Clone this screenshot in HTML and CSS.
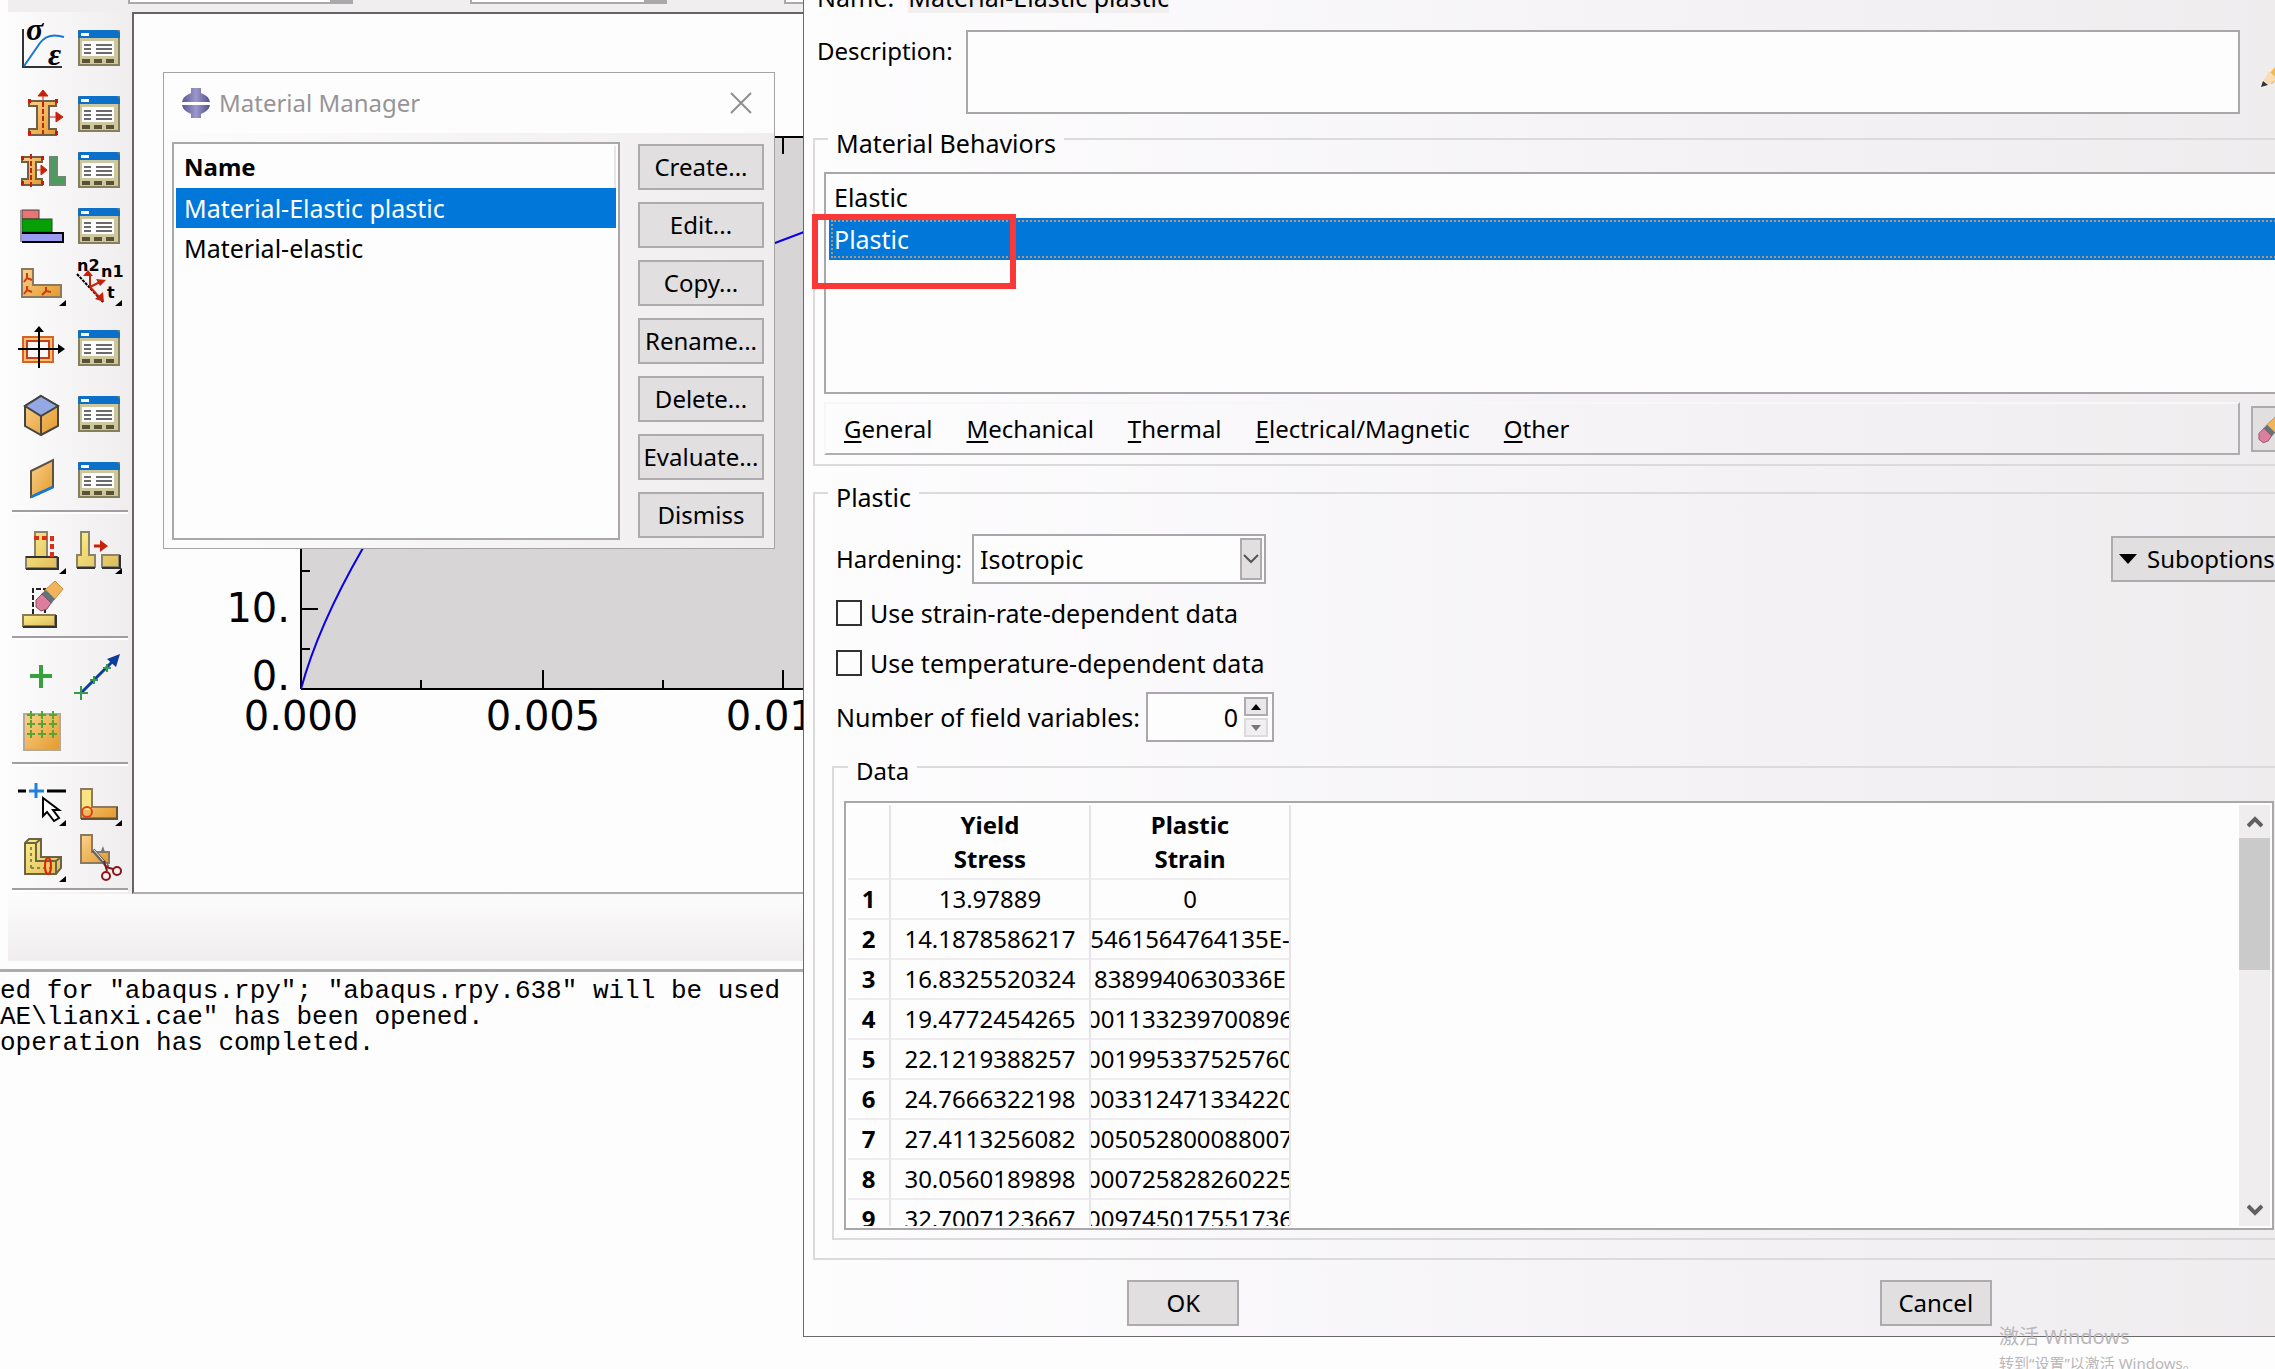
FILE: index.html
```html
<!DOCTYPE html>
<html lang="en">
<head>
  <meta charset="UTF-8">
  <title>Edit Material</title>
  <link rel="stylesheet" href="styles.css">
</head>
<body>

  <!-- shared icons -->
  <svg class="defs" width="0" height="0">
    <defs>
      <linearGradient id="orange" x1="0" y1="0" x2="1" y2="1">
        <stop offset="0" stop-color="#fbd28c"/><stop offset="1" stop-color="#e39a2c"/>
      </linearGradient>
      <linearGradient id="yellow" x1="0" y1="0" x2="1" y2="1">
        <stop offset="0" stop-color="#fbee88"/><stop offset="1" stop-color="#e0bb5c"/>
      </linearGradient>
      <linearGradient id="purple" x1="0" y1="0" x2="1" y2="0">
        <stop offset="0" stop-color="#5d5790"/><stop offset=".5" stop-color="#9c98cc"/><stop offset="1" stop-color="#544e86"/>
      </linearGradient>
      <symbol id="manager" viewBox="0 0 56 56">
        <rect x="9" y="11" width="40" height="34" fill="#cdc7a0" stroke="#85805c" stroke-width="2"/>
        <path d="M8 18v-7l2-1h37l3 3v5z" fill="#0c70c8"/>
        <rect x="11" y="13" width="8" height="3" fill="#fff"/>
        <rect x="12" y="21" width="32" height="15" fill="#fdfdfd"/>
        <path d="M14 25h7M26 25h16M14 29h7M26 29h16M14 33h7M26 33h16" stroke="#6b6b6b" stroke-width="2"/>
        <path d="M12 41h8M24 41h8M36 41h8" stroke="#5a5230" stroke-width="4"/>
      </symbol>
      <symbol id="corner" viewBox="0 0 56 56"><path d="M52 46v6h-7z" fill="#000"/></symbol>
      <symbol id="eraser" viewBox="0 0 56 56">
        <path d="M30 13l11-10 8 8-9 11z" fill="#f2b45a" stroke="#c98a3c"/>
        <path d="M27 16l5-4 9 9-4 5z" fill="#60747c"/>
        <path d="M22 22l6-6 9 9-4 6-6 2-5-4z" fill="#dc7f9e" stroke="#8c4c62"/>
      </symbol>
    </defs>
  </svg>

  <div class="app">
    <div class="context-bar">
      <span class="combo combo-wide"></span>
      <span class="combo"></span>
      <span class="combo"></span>
    </div>

    <div class="workspace">
      <div class="toolbox">
        <div class="tool-row">
          <button class="tool" aria-label="Create material"><svg viewBox="0 0 56 56">
            <path d="M9 9v38h39" fill="none" stroke="#333" stroke-width="2"/>
            <path d="M10 46L26 23Q34 12 50 17" fill="none" stroke="#1478d4" stroke-width="2"/>
            <text x="12" y="20" class="greek">σ</text><text x="34" y="45" class="greek">ε</text></svg></button>
          <button class="tool" aria-label="Material manager"><svg><use href="#manager"/></svg></button>
        </div>
        <div class="tool-row spaced">
          <button class="tool" aria-label="Create section"><svg viewBox="0 0 56 56">
            <path d="M15 15h27v5h-7v23h7v6h-27v-6h8v-23h-8z" fill="url(#orange)" stroke="#6f5f48" stroke-width="2"/>
            <path d="M29 16v32" stroke="#c8210a" stroke-width="2" stroke-dasharray="5 2"/>
            <path d="M29 4l5 6h-10zM29 9v5M49 31l-7-5v10zM36 31h7" fill="#c8210a" stroke="#c8210a"/>
            <path d="M14 15h3M41 15h3M14 47h3M41 47h3" stroke="#d01808" stroke-width="4"/></svg></button>
          <button class="tool" aria-label="Section manager"><svg><use href="#manager"/></svg></button>
        </div>
        <div class="tool-row">
          <button class="tool" aria-label="Assign section"><svg viewBox="0 0 56 56">
            <path d="M8 15h20v5h-6v17h6v6H8v-6h6V20H8z" fill="url(#orange)" stroke="#6f5f48" stroke-width="2"/>
            <path d="M17 12v33" stroke="#c8210a" stroke-width="2" stroke-dasharray="5 2"/>
            <path d="M33 28l-6-5v10zM23 28h5" fill="#c8210a" stroke="#c8210a"/>
            <path d="M7 16h3M27 16h3M7 41h3M27 41h3" stroke="#d01808" stroke-width="4"/>
            <path d="M36 15h7v20h8v8H36z" fill="#4a9e5c" stroke="#6d8a72" stroke-width="2"/></svg></button>
          <button class="tool" aria-label="Section assignment manager"><svg><use href="#manager"/></svg></button>
        </div>
        <div class="tool-row">
          <button class="tool" aria-label="Create composite layup"><svg viewBox="0 0 56 56">
            <rect x="8" y="12" width="17" height="9" fill="#e87474" stroke="#444"/>
            <rect x="8" y="21" width="30" height="13" fill="#06a006" stroke="#145214"/>
            <rect x="8" y="35" width="41" height="9" fill="#9a9cf4"/>
            <path d="M8 35h41v9H8" fill="none" stroke="#000" stroke-width="2"/>
            <path d="M7 12v32" stroke="#999" stroke-width="2"/></svg></button>
          <button class="tool" aria-label="Composite layup manager"><svg><use href="#manager"/></svg></button>
        </div>
        <div class="tool-row">
          <button class="tool" aria-label="Assign material orientation"><svg viewBox="0 0 56 56">
            <path d="M8 15h11v16h28v12H8z" fill="url(#orange)" stroke="#8b7a60" stroke-width="2"/>
            <path d="M13 19v5l-3 4M13 24l5 2M13 32v4l-3 4M13 36l5 2M32 33v4l-4 4M32 37l5 1" fill="none" stroke="#d03818" stroke-width="2"/>
            <use href="#corner"/></svg></button>
          <button class="tool" aria-label="Assign beam orientation"><svg viewBox="0 0 56 56">
            <path d="M7 20l26 28" stroke="#000" stroke-width="2" stroke-dasharray="3 1"/>
            <path d="M20 33V20M20 33l10-5M20 33l11 12" stroke="#c8210a" stroke-width="2"/>
            <path d="M18 16l5 6H13zM36 26l-10-1 4 7zM34 48l-9-3 8-7z" fill="#c8210a"/>
            <text x="7" y="17" class="axis-name">n2</text><text x="31" y="23" class="axis-name">n1</text>
            <text x="37" y="44" class="axis-name">t</text><use href="#corner"/></svg></button>
        </div>
        <div class="tool-row spaced">
          <button class="tool" aria-label="Create profile"><svg viewBox="0 0 56 56">
            <rect x="9" y="17" width="30" height="25" fill="#fbc46c" stroke="#d4622c" stroke-width="2"/>
            <rect x="13" y="21" width="22" height="17" fill="#fbf5f5" stroke="#c83c1c" stroke-width="2"/>
            <path d="M4 29h42M25 10v38" stroke="#000" stroke-width="2"/>
            <path d="M51 29l-7-5v10zM25 6l5 6H20z" fill="#000"/></svg></button>
          <button class="tool" aria-label="Profile manager"><svg><use href="#manager"/></svg></button>
        </div>
        <div class="tool-row spaced">
          <button class="tool" aria-label="Create skin"><svg viewBox="0 0 56 56">
            <path d="M27 10l17 10v20L27 49 11 40V20z" fill="url(#orange)" stroke="#444" stroke-width="2"/>
            <path d="M27 10l17 10-17 10-16-10z" fill="#94a8e4" stroke="#444" stroke-width="2"/>
            <path d="M27 30v19" stroke="#444" stroke-width="2"/></svg></button>
          <button class="tool" aria-label="Skin manager"><svg><use href="#manager"/></svg></button>
        </div>
        <div class="tool-row spaced">
          <button class="tool" aria-label="Create stringer"><svg viewBox="0 0 56 56">
            <path d="M17 19L39 8v27L17 45z" fill="url(#orange)" stroke="#5c5244" stroke-width="2"/>
            <path d="M17 45l22-10" stroke="#1478d4" stroke-width="3"/></svg></button>
          <button class="tool" aria-label="Stringer manager"><svg><use href="#manager"/></svg></button>
        </div>
        <div class="separator"></div>
        <div class="tool-row">
          <button class="tool" aria-label="Create inertia"><svg viewBox="0 0 56 56">
            <path d="M21 10h12v25h10v11H12V35h9z" fill="url(#yellow)" stroke="#8a8468" stroke-width="2"/>
            <path d="M12 47h32V35M12 35h31" fill="none" stroke="#333" stroke-width="2"/>
            <path d="M20 16h14M38 14v21" stroke="#d8301c" stroke-width="4" stroke-dasharray="5 3"/>
            <use href="#corner"/></svg></button>
          <button class="tool" aria-label="Detach feature"><svg viewBox="0 0 56 56">
            <path d="M11 10h8v23h6v12H7V33h4zM32 33h17v12H32z" fill="url(#yellow)" stroke="#8a8468" stroke-width="2"/>
            <path d="M7 46h18M32 46h18V33" fill="none" stroke="#333" stroke-width="2"/>
            <path d="M24 24h8" stroke="#c8210a" stroke-width="3"/><path d="M38 24l-8-6v12z" fill="#c8210a"/>
            <use href="#corner"/></svg></button>
        </div>
        <div class="tool-row">
          <button class="tool" aria-label="Remove faces"><svg viewBox="0 0 56 56">
            <path d="M19 36V11h12v25" fill="none" stroke="#222" stroke-width="2" stroke-dasharray="5 2"/>
            <rect x="9" y="37" width="32" height="11" fill="url(#yellow)" stroke="#8a7c50" stroke-width="2"/>
            <path d="M9 49h33V37" fill="none" stroke="#333" stroke-width="2"/>
            <use href="#eraser"/></svg></button>
        </div>
        <div class="separator"></div>
        <div class="tool-row">
          <button class="tool" aria-label="Create datum point"><svg viewBox="0 0 56 56">
            <path d="M16 28h22M27 17v23" stroke="#38a03c" stroke-width="4"/></svg></button>
          <button class="tool" aria-label="Create datum axis"><svg viewBox="0 0 56 56">
            <path d="M11 45L44 12" stroke="#0c3c9c" stroke-width="3"/>
            <path d="M50 6l-4 13-9-8z" fill="#0c3c9c"/>
            <path d="M4 45h14M11 38v14M20 32h8M24 28v8M33 20h8M37 16v8" stroke="#38984c" stroke-width="2"/></svg></button>
        </div>
        <div class="tool-row">
          <button class="tool" aria-label="Create reference points"><svg viewBox="0 0 56 56">
            <rect x="10" y="10" width="36" height="36" fill="url(#orange)" stroke="#b5aa98" stroke-width="2"/>
            <path d="M13 11h8M24 11h8M35 11h8M13 20h8M24 20h8M35 20h8M13 30h8M24 30h8M35 30h8M17 7v8M28 7v8M39 7v8M17 16v8M28 16v8M39 16v8M17 26v8M28 26v8M39 26v8" stroke="#5aa430" stroke-width="2"/></svg></button>
        </div>
        <div class="separator"></div>
        <div class="tool-row">
          <button class="tool" aria-label="Partition edge"><svg viewBox="0 0 56 56">
            <path d="M4 17h8M33 17h19" stroke="#000" stroke-width="3"/>
            <path d="M15 17h15M22 9v15" stroke="#2080e0" stroke-width="3"/>
            <path d="M29 24v18l4-4 7 9 5-3-6-8h6z" fill="#fff" stroke="#000" stroke-width="2"/>
            <use href="#corner"/></svg></button>
          <button class="tool" aria-label="Partition face"><svg viewBox="0 0 56 56">
            <path d="M11 15h11v18h25v11H11z" fill="url(#orange)" stroke="#8b7a60" stroke-width="2"/>
            <path d="M12 16h9v20h-9z" fill="#f8e482"/><path d="M47 33v12H11" fill="none" stroke="#64543c" stroke-width="2"/>
            <circle cx="17" cy="38" r="5" fill="none" stroke="#e04018" stroke-width="2"/>
            <use href="#corner"/></svg></button>
        </div>
        <div class="tool-row">
          <button class="tool" aria-label="Partition cell"><svg viewBox="0 0 56 56">
            <path d="M11 13l4-4h12v18h20v11l-5 6H11z" fill="url(#yellow)" stroke="#6c6444" stroke-width="2"/>
            <path d="M11 13h11l5-4M22 13v18h20l5-4M42 31v13" fill="none" stroke="#6c6444" stroke-width="2"/>
            <path d="M17 17v22M17 38h22" stroke="#8b8358" stroke-width="2" stroke-dasharray="3 3"/>
            <ellipse cx="34" cy="36" rx="3" ry="8" fill="none" stroke="#d8280c" stroke-width="2"/>
            <use href="#corner"/></svg></button>
          <button class="tool" aria-label="Delete partition"><svg viewBox="0 0 56 56">
            <path d="M11 5h11v17h17v11H11z" fill="url(#orange)" stroke="#8b7a60" stroke-width="2"/>
            <path d="M23 20l15 17" stroke="#666" stroke-width="4"/><path d="M24 20l13 15" stroke="#eee"/>
            <path d="M31 21l2-5 2 6" fill="#777"/>
            <path d="M34 31l3 10M36 37l7 2" stroke="#8c1414" stroke-width="2"/>
            <circle cx="36" cy="46" r="4" fill="none" stroke="#8c1414" stroke-width="2"/>
            <circle cx="47" cy="41" r="4" fill="none" stroke="#8c1414" stroke-width="2"/></svg></button>
        </div>
        <div class="separator"></div>
      </div>

      <div class="viewport">
        <svg class="plot" width="900" height="878">
          <rect x="167" y="123" width="733" height="552" fill="#d7d5d6"/>
          <path d="M167 675V123H900M167 675H900" fill="none" stroke="#000" stroke-width="2"/>
          <path d="M168 557h8M168 595h16M168 635h8M287 674v-8M409 674v-18M529 674v-8M649 674v-18M649 124v16" stroke="#000" stroke-width="2"/>
          <path d="M167 675Q184 612 229 534C300 400 450 280 641 229L670 218 700 210" fill="none" stroke="#0a00e6" stroke-width="2"/>
          <g class="plot-label">
            <text x="156" y="608" text-anchor="end">10.</text>
            <text x="156" y="676" text-anchor="end">0.</text>
            <text x="167" y="716" text-anchor="middle">0.000</text>
            <text x="409" y="716" text-anchor="middle">0.005</text>
            <text x="649" y="716" text-anchor="middle">0.010</text>
          </g>
        </svg>
      </div>
    </div>

    <div class="prompt-area"></div>
    <div class="messages">
      <pre>ed for "abaqus.rpy"; "abaqus.rpy.638" will be used
AE\lianxi.cae" has been opened.
operation has completed.</pre>
    </div>
  </div>

  <!-- Material Manager window -->
  <div class="window manager">
    <div class="title-bar">
      <svg class="logo" width="30" height="30" viewBox="0 0 30 30">
        <path d="M10 0h10v5q8 3 9 9H1q1-6 9-9zM1 17h28q-1 6-9 9v4H10v-4q-8-3-9-9z" fill="url(#purple)"/>
      </svg>
      <span class="title">Material Manager</span>
      <button class="close" aria-label="Close"><svg width="22" height="22" viewBox="0 0 22 22"><path d="M1 1l20 20M21 1L1 21" stroke="#8f8f8f" stroke-width="2"/></svg></button>
    </div>
    <div class="manager-body">
      <div class="list manager-list">
        <div class="list-head">Name</div>
        <ul>
          <li class="selected">Material-Elastic plastic</li>
          <li>Material-elastic</li>
        </ul>
      </div>
      <div class="manager-actions">
        <button class="btn">Create...</button>
        <button class="btn">Edit...</button>
        <button class="btn">Copy...</button>
        <button class="btn">Rename...</button>
        <button class="btn">Delete...</button>
        <button class="btn">Evaluate...</button>
        <button class="btn">Dismiss</button>
      </div>
    </div>
  </div>

  <!-- Edit Material window -->
  <form class="window editor">
    <div class="name-row">Name: <span class="name-value">Material-Elastic plastic</span></div>
    <div class="description-row">
      <label for="description">Description:</label>
      <textarea id="description"></textarea>
      <button type="button" class="pencil" aria-label="Edit description"><svg width="34" height="34" viewBox="0 0 34 34">
        <path d="M3 23L20 3l9 8-18 16z" fill="#f0bb50"/><path d="M3 23l5-9 8 8-9 6z" fill="#fbdcb8"/><path d="M0 30l2-6 5 4z" fill="#333"/></svg></button>
    </div>

    <fieldset class="behaviors">
      <legend>Material Behaviors</legend>
      <ul class="list behavior-list">
        <li>Elastic</li>
        <li class="selected">Plastic<span class="callout"></span></li>
      </ul>
      <div class="menu-row">
        <div class="menu-bar">
          <button type="button"><u>G</u>eneral</button>
          <button type="button"><u>M</u>echanical</button>
          <button type="button"><u>T</u>hermal</button>
          <button type="button"><u>E</u>lectrical/Magnetic</button>
          <button type="button"><u>O</u>ther</button>
        </div>
        <button type="button" class="btn delete-behavior" aria-label="Delete behavior"><svg width="44" height="44" viewBox="15 -8 52 52"><use href="#eraser" width="56" height="56"/></svg></button>
      </div>
    </fieldset>

    <fieldset class="plastic">
      <legend>Plastic</legend>
      <div class="hardening-row">
        <label for="hardening">Hardening:</label>
        <div class="select-box">
          <select id="hardening"><option>Isotropic</option></select>
          <span class="select-arrow"><svg width="16" height="12" viewBox="0 0 16 12"><path d="M1 2l7 7 7-7" fill="none" stroke="#555" stroke-width="2"/></svg></span>
        </div>
        <button type="button" class="btn suboptions"><svg width="18" height="10" viewBox="0 0 18 10"><path d="M0 0h18l-9 10z"/></svg>Suboptions</button>
      </div>
      <label class="check"><input type="checkbox"> Use strain-rate-dependent data</label>
      <label class="check"><input type="checkbox"> Use temperature-dependent data</label>
      <div class="field-row">
        <label for="fields">Number of field variables:</label>
        <div class="spinner">
          <input id="fields" type="text" value="0">
          <div class="spin-buttons">
            <button type="button" aria-label="Increase"><svg width="10" height="6" viewBox="0 0 10 6"><path d="M0 6h10L5 0z"/></svg></button>
            <button type="button" class="off" aria-label="Decrease"><svg width="10" height="6" viewBox="0 0 10 6"><path d="M0 0h10L5 6z"/></svg></button>
          </div>
        </div>
      </div>

      <fieldset class="data">
        <legend>Data</legend>
        <div class="table-box">
          <div class="table-pane">
            <table>
              <colgroup><col class="col-no"><col class="col-value"><col class="col-value"></colgroup>
              <thead>
                <tr><th></th><th>Yield<br>Stress</th><th>Plastic<br>Strain</th></tr>
              </thead>
              <tbody>
                <tr><th>1</th><td><div>13.97889</div></td><td><div>0</div></td></tr>
                <tr><th>2</th><td><div>14.1878586217</div></td><td><div>5461564764135E-</div></td></tr>
                <tr><th>3</th><td><div>16.8325520324</div></td><td><div>8389940630336E</div></td></tr>
                <tr><th>4</th><td><div>19.4772454265</div></td><td><div>001133239700896</div></td></tr>
                <tr><th>5</th><td><div>22.1219388257</div></td><td><div>001995337525760</div></td></tr>
                <tr><th>6</th><td><div>24.7666322198</div></td><td><div>003312471334220</div></td></tr>
                <tr><th>7</th><td><div>27.4113256082</div></td><td><div>005052800088007</div></td></tr>
                <tr><th>8</th><td><div>30.0560189898</div></td><td><div>000725828260225</div></td></tr>
                <tr><th>9</th><td><div>32.7007123667</div></td><td><div>009745017551736</div></td></tr>
              </tbody>
            </table>
          </div>
          <div class="scrollbar">
            <button type="button" aria-label="Scroll up"><svg width="16" height="12" viewBox="0 0 16 12"><path d="M1 10l7-7 7 7" fill="none" stroke="#606060" stroke-width="4"/></svg></button>
            <div class="thumb"></div>
            <button type="button" class="down" aria-label="Scroll down"><svg width="16" height="12" viewBox="0 0 16 12"><path d="M1 2l7 7 7-7" fill="none" stroke="#606060" stroke-width="4"/></svg></button>
          </div>
        </div>
      </fieldset>
    </fieldset>

    <div class="dialog-actions">
      <button type="button" class="btn">OK</button>
      <button type="button" class="btn">Cancel</button>
    </div>
  </form>

  <div class="watermark">
    <p class="watermark-title">激活 Windows</p>
    <p class="watermark-text">转到“设置”以激活 Windows。</p>
  </div>

</body>
</html>
```
FILE: styles.css
```css
* {
  margin: 0;
  padding: 0;
  box-sizing: border-box;
}

body {
  position: relative;
  height: 100vh;
  overflow: hidden;
  background: #fefdfe;
  color: #000;
  font-family: 'Noto Sans', 'Open Sans', 'Noto Sans CJK SC', sans-serif;
  font-size: 25px;
  line-height: 32px;
}

button, input, select, textarea {
  font: inherit;
  color: inherit;
}

button {
  background: none;
  border: none;
  font-size: 24px;
}

ul {
  list-style: none;
}

svg {
  display: block;
}

.defs {
  position: absolute;
}

.btn {
  height: 46px;
  background: #e1dfe0;
  border: 2px solid #adabad;
  white-space: nowrap;
}

/* Main window */
.context-bar {
  display: flex;
  gap: 117px;
  height: 12px;
  margin-left: 8px;
  padding-left: 120px;
  background: #f0eeef;
}

.combo {
  width: 197px;
  height: 4px;
  background: #fff;
  border: 2px solid #aaa8aa;
  border-top: none;
  border-right: 23px solid #aaa8aa;
}

.combo-wide {
  width: 225px;
}

.workspace {
  display: flex;
}

.toolbox {
  width: 124px;
  margin-left: 8px;
  padding: 8px 4px 0;
  background: linear-gradient(to right, #fdfcfd, #efedee);
}

.tool-row {
  display: flex;
  padding-left: 2px;
}

.tool-row.spaced {
  margin-top: 10px;
}

.tool, .tool svg {
  width: 56px;
  height: 56px;
}

.separator {
  height: 4px;
  margin: 2px 0 8px;
  background: #fff;
  border-top: 2px solid #a09ea0;
}

.separator:last-child {
  margin-bottom: 0;
}

.greek {
  font: italic bold 32px 'Liberation Serif', serif;
}

.axis-name {
  font: bold 16px 'DejaVu Sans', sans-serif;
}

.viewport {
  flex: 1;
  overflow: hidden;
  border: 2px solid #666466;
  border-bottom-color: #b0aeb0;
  background: #fefdfe;
}

.plot-label {
  font: 40px 'DejaVu Sans', sans-serif;
}

.prompt-area {
  height: 67px;
  margin-left: 8px;
  background: linear-gradient(#fdfcfd, #efedee);
}

.messages {
  margin-top: 8px;
  padding-top: 6px;
  border-top: 3px solid #adabad;
}

.messages pre {
  font: 26px/26px 'Liberation Mono', monospace;
}

/* Windows */
.window {
  position: absolute;
}

.list {
  background: #fefdfe;
  border: 2px solid #a9a7a9;
}

.selected {
  background: #0077d9;
  color: #fff;
}

.manager {
  top: 72px;
  left: 163px;
  width: 612px;
  border: 1px solid #a5a3a5;
  background: linear-gradient(to right, #fdfcfd, #efedee);
}

.title-bar {
  display: flex;
  align-items: center;
  gap: 8px;
  height: 60px;
  padding: 0 22px 0 17px;
  background: #fefdfe;
  color: #969496;
  font-size: 24px;
}

.title {
  flex: 1;
}

.manager-body {
  display: flex;
  gap: 18px;
  padding: 9px 10px 8px 8px;
}

.manager-list {
  flex: 1;
  padding: 2px;
}

.list-head {
  height: 42px;
  padding-left: 8px;
  border-right: 2px solid #e8e6e8;
  font-size: 24px;
  font-weight: bold;
  line-height: 42px;
}

.manager-list li {
  height: 40px;
  padding-left: 8px;
  line-height: 40px;
}

.manager-actions {
  display: flex;
  flex-direction: column;
  gap: 12px;
  width: 126px;
  padding: 2px 0;
}

.editor {
  top: -20px;
  left: 803px;
  right: -42px;
  padding: 1px 10px 10px 9px;
  border: 1px solid #6b696b;
  border-top: none;
  background: linear-gradient(to right, #fefdfe, #f4f2f5 60%, #eeeced);
}

.name-row {
  display: flex;
  gap: 14px;
  padding-left: 4px;
}

.name-value {
  background: #f1eff0;
}

.description-row {
  display: flex;
  gap: 11px;
  margin: 17px 11px 0 4px;
}

.description-row label {
  width: 138px;
  padding-top: 5px;
  font-size: 24px;
}

.description-row textarea {
  flex: 1;
  height: 84px;
  resize: none;
  border: 2px solid #a9a7a9;
  background: #fefdfe;
}

.pencil {
  width: 44px;
  padding: 4px 0 0 10px;
}

fieldset {
  min-width: 0;
  border: 2px solid #dcdadc;
}

legend {
  margin-left: 4px;
  padding: 8px 8px 0;
  line-height: 28px;
}

.behaviors {
  margin-top: 7px;
  padding: 15px 9px 9px;
}

.behavior-list {
  height: 222px;
  padding: 2px 3px;
}

.behavior-list li {
  position: relative;
  height: 42px;
  padding-left: 5px;
  line-height: 42px;
}

.behavior-list .selected {
  outline: 2px dotted #b8947c;
  outline-offset: -4px;
}

.callout {
  position: absolute;
  top: -4px;
  left: -17px;
  width: 204px;
  height: 75px;
  border: 6px solid #fb3838;
}

.menu-row {
  display: flex;
  align-items: center;
  gap: 11px;
  margin-top: 8px;
}

.menu-bar {
  flex: 1;
  display: flex;
  gap: 34px;
  height: 53px;
  padding: 0 18px;
  border: 2px solid #b0aeb0;
  border-top-color: #f8f6f8;
  border-left-color: #f8f6f8;
}

.menu-bar u {
  text-underline-offset: 3px;
}

.delete-behavior {
  width: 44px;
  overflow: hidden;
}

.plastic {
  margin-top: 9px;
  padding: 23px 19px 18px 17px;
}

.plastic > legend {
  margin-left: -4px;
}

.hardening-row, .field-row {
  display: flex;
  align-items: center;
  gap: 6px;
  margin-left: 4px;
}

.hardening-row label {
  width: 130px;
  font-size: 24px;
}

.select-box {
  position: relative;
}

.select-box select {
  display: block;
  width: 294px;
  height: 50px;
  padding-left: 6px;
  appearance: none;
  border: 2px solid #a9a7a9;
  border-radius: 0;
  background: #fefdfe;
}

.select-arrow {
  position: absolute;
  top: 4px;
  right: 4px;
  bottom: 4px;
  width: 22px;
  display: flex;
  align-items: center;
  justify-content: center;
  border: 2px solid #adabad;
  background: #e1dfe0;
  pointer-events: none;
}

.suboptions {
  display: flex;
  align-items: center;
  gap: 10px;
  width: 174px;
  margin-left: auto;
  padding-left: 6px;
}

.check {
  display: flex;
  align-items: center;
  gap: 8px;
  margin: 13px 0 18px 4px;
}

.check input {
  width: 26px;
  height: 26px;
  appearance: none;
  border: 2px solid #333133;
  background: #fefdfe;
}

.check + .check {
  margin-bottom: 13px;
}

.spinner {
  display: flex;
  width: 128px;
  height: 50px;
  padding: 3px 4px;
  border: 2px solid #a9a7a9;
  background: #fefdfe;
}

.spinner input {
  flex: 1;
  min-width: 0;
  padding-right: 6px;
  border: none;
  background: none;
  text-align: right;
}

.spin-buttons {
  display: flex;
  flex-direction: column;
  gap: 2px;
}

.spin-buttons button {
  flex: 1;
  display: flex;
  align-items: center;
  justify-content: center;
  width: 24px;
  border: 2px solid #adabad;
  background: #e9e7e9;
}

.spin-buttons .off {
  border-color: #dcdadc;
  background: #f1eff1;
  fill: #777;
}

.data {
  margin-top: 7px;
  padding: 16px 9px 8px 10px;
}

.data legend {
  font-size: 24px;
}

.table-box {
  display: flex;
  height: 429px;
  padding: 2px;
  border: 2px solid #a9a7a9;
  background: #fefdfe;
}

.table-pane {
  flex: 1;
  overflow: hidden;
}

table {
  width: 443px;
  table-layout: fixed;
  border-collapse: separate;
  border-spacing: 0;
  font-size: 24px;
}

.col-no {
  width: 43px;
}

.col-value {
  width: 200px;
}

th, td {
  height: 40px;
  border-right: 2px solid #e6e4e6;
  border-bottom: 2px solid #eeecee;
  text-align: center;
}

thead th {
  height: 75px;
  line-height: 34px;
}

td div {
  display: flex;
  justify-content: center;
  overflow: hidden;
  white-space: nowrap;
}

.scrollbar {
  display: flex;
  flex-direction: column;
  width: 31px;
  background: #efedee;
}

.scrollbar button {
  display: flex;
  align-items: center;
  justify-content: center;
  height: 33px;
}

.scrollbar .down {
  margin-top: auto;
}

.thumb {
  height: 132px;
  background: #cbcacb;
}

.dialog-actions {
  display: flex;
  justify-content: space-around;
  margin: 20px -6px 0;
}

.dialog-actions .btn {
  width: 112px;
}

.watermark {
  position: absolute;
  right: 80px;
  bottom: -6px;
  width: 196px;
  color: #b9b7b9;
  white-space: nowrap;
}

.watermark-title {
  font-size: 20px;
  line-height: 28px;
}

.watermark-text {
  font-size: 15px;
  line-height: 24px;
}
```
